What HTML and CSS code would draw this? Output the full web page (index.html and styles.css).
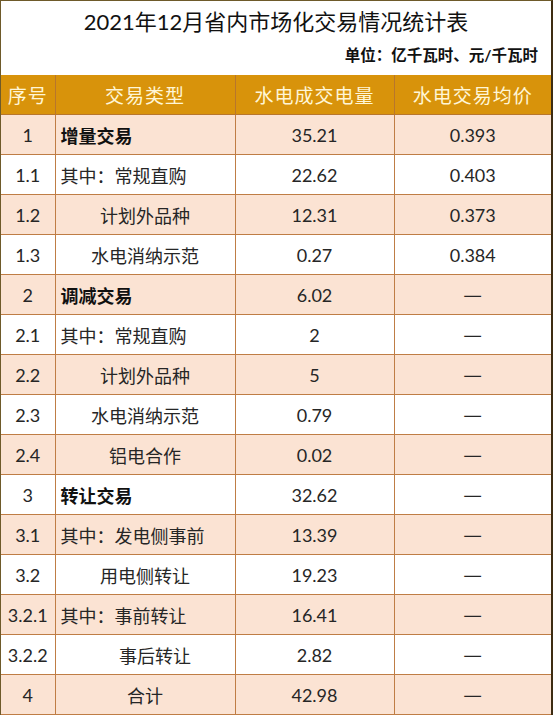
FILE: index.html
```html
<!DOCTYPE html>
<html lang="zh-CN">
<head>
<meta charset="utf-8">
<link rel="stylesheet" href="styles.css">
</head>
<body>
<div class="sheet">
  <div class="title-block">
    <div class="title">2021年12月省内市场化交易情况统计表</div>
    <div class="unit">单位：亿千瓦时、元/千瓦时</div>
  </div>
  <table class="grid">
    <colgroup>
      <col class="c1"><col class="c2"><col class="c3"><col class="c4">
    </colgroup>
    <thead>
      <tr><th>序号</th><th>交易类型</th><th>水电成交电量</th><th>水电交易均价</th></tr>
    </thead>
    <tbody>
      <tr class="shade"><td>1</td><td class="left bold">增量交易</td><td>35.21</td><td>0.393</td></tr>
      <tr><td>1.1</td><td class="left">其中：常规直购</td><td>22.62</td><td>0.403</td></tr>
      <tr class="shade"><td>1.2</td><td>计划外品种</td><td>12.31</td><td>0.373</td></tr>
      <tr><td>1.3</td><td>水电消纳示范</td><td>0.27</td><td>0.384</td></tr>
      <tr class="shade"><td>2</td><td class="left bold">调减交易</td><td>6.02</td><td class="dash">—</td></tr>
      <tr><td>2.1</td><td class="left">其中：常规直购</td><td>2</td><td class="dash">—</td></tr>
      <tr class="shade"><td>2.2</td><td>计划外品种</td><td>5</td><td class="dash">—</td></tr>
      <tr><td>2.3</td><td>水电消纳示范</td><td>0.79</td><td class="dash">—</td></tr>
      <tr class="shade"><td>2.4</td><td>铝电合作</td><td>0.02</td><td class="dash">—</td></tr>
      <tr><td>3</td><td class="left bold">转让交易</td><td>32.62</td><td class="dash">—</td></tr>
      <tr class="shade"><td>3.1</td><td class="left">其中：发电侧事前</td><td>13.39</td><td class="dash">—</td></tr>
      <tr><td>3.2</td><td>用电侧转让</td><td>19.23</td><td class="dash">—</td></tr>
      <tr class="shade"><td>3.2.1</td><td class="left">其中：事前转让</td><td>16.41</td><td class="dash">—</td></tr>
      <tr><td>3.2.2</td><td class="indent">事后转让</td><td>2.82</td><td class="dash">—</td></tr>
      <tr class="shade"><td>4</td><td>合计</td><td>42.98</td><td class="dash">—</td></tr>
    </tbody>
  </table>
</div>
</body>
</html>
```

FILE: styles.css
```css
html, body {
  margin: 0;
  padding: 0;
  background: #ffffff;
}
body {
  font-family: Lato, "Noto Sans CJK SC", sans-serif;
  color: #222222;
}
.sheet {
  width: 550px;
  border-left: 1px solid #6e5a2a;
  border-top: 1px solid #6e5a2a;
  border-right: 2px solid #3d2c12;
}
.title-block {
  height: 74px;
  display: flex;
  flex-direction: column;
}
.title {
  font-size: 22px;
  line-height: 24px;
  text-align: center;
  padding-top: 9px;
  color: #111111;
}
.unit {
  font-size: 15.5px;
  font-weight: bold;
  line-height: 18px;
  text-align: right;
  padding-right: 13px;
  margin-top: 12px;
  color: #111111;
}
.grid {
  width: 550px;
  border-collapse: collapse;
  table-layout: fixed;
}
.c1 { width: 54px; }
.c2 { width: 180px; }
.c3 { width: 159px; }
.c4 { width: 157px; }
.grid th, .grid td {
  height: 39px;
  padding: 0;
  text-align: center;
  vertical-align: middle;
  border: 1px solid #bf7d45;
  white-space: nowrap;
}
.grid tr:first-child th { border-top: none; }
.grid th:first-child, .grid td:first-child { border-left: none; }
.grid th:last-child, .grid td:last-child { border-right: none; }
.grid th {
  background: #d8930b;
  color: #fff6d6;
  font-weight: normal;
  font-size: 19px;
  letter-spacing: 1px;
  border-color: #b8762c;
}
.grid td {
  font-size: 18px;
  color: #262626;
}
.grid tr.shade td {
  background: #fbe3d3;
}
.grid td.left {
  text-align: left;
  padding-left: 5px;
}
.grid td.bold {
  font-weight: bold;
  color: #111111;
}
.grid td.indent {
  padding-left: 20px;
}
.grid td.dash {
  font-family: "Noto Sans CJK SC", sans-serif;
  font-size: 21px;
  line-height: 20px;
  height: 36px;
  padding-bottom: 3px;
}
```
